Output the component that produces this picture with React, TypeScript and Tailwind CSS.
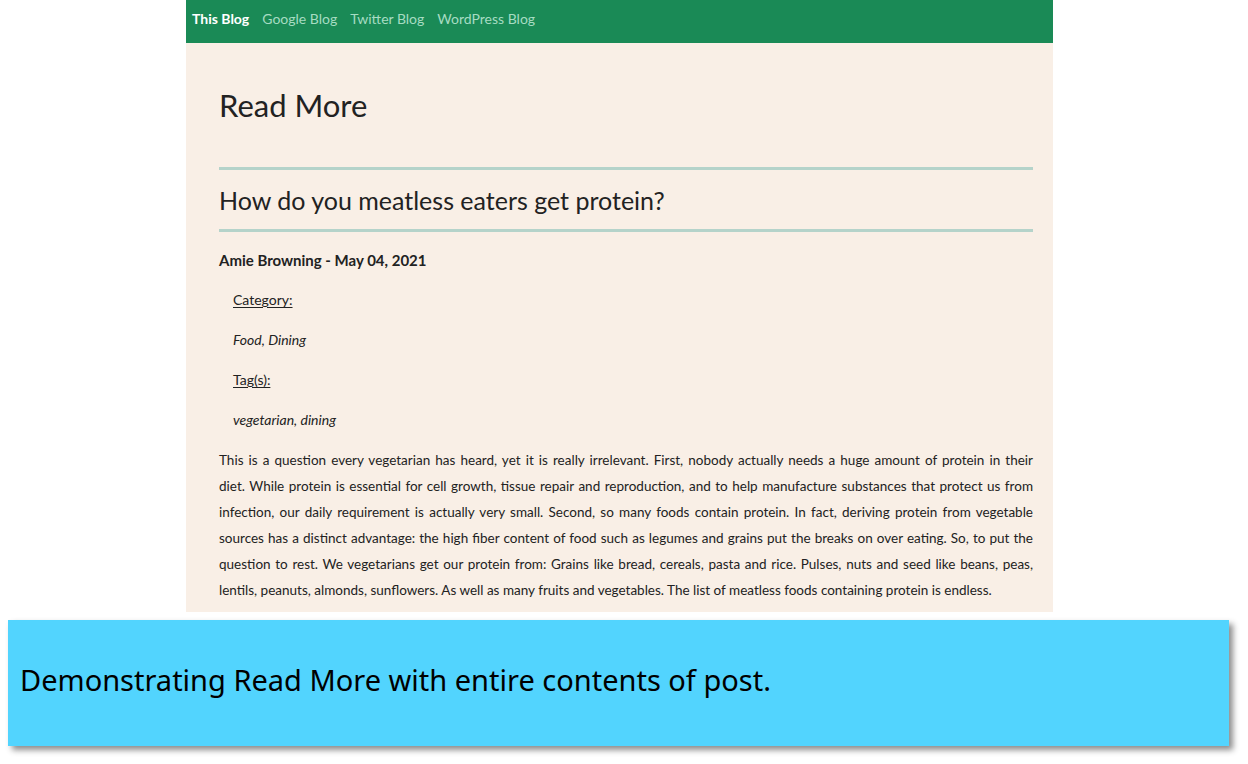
import React from "react";

const lines = [
  "This is a question every vegetarian has heard, yet it is really irrelevant. First, nobody actually needs a huge amount of protein in their",
  "diet. While protein is essential for cell growth, tissue repair and reproduction, and to help manufacture substances that protect us from",
  "infection, our daily requirement is actually very small. Second, so many foods contain protein. In fact, deriving protein from vegetable",
  "sources has a distinct advantage: the high fiber content of food such as legumes and grains put the breaks on over eating. So, to put the",
  "question to rest. We vegetarians get our protein from: Grains like bread, cereals, pasta and rice. Pulses, nuts and seed like beans, peas,",
];
const lastLine =
  "lentils, peanuts, almonds, sunflowers. As well as many fruits and vegetables. The list of meatless foods containing protein is endless.";

export default function App() {
  return (
    <div className="min-h-[764px] w-full bg-white relative">
      <div className="ml-[186px] w-[867px] font-['Lato',sans-serif] text-[#222]">
        <nav className="h-[43px] bg-[#1a8a56] pl-[6px] pt-[9px] flex gap-[13px] text-[14px] leading-[20px]">
          <span className="text-white font-bold">This Blog</span>
          <span className="text-[#a6dcc2]">Google Blog</span>
          <span className="text-[#a6dcc2]">Twitter Blog</span>
          <span className="text-[#a6dcc2]">WordPress Blog</span>
        </nav>
        <div className="bg-[#f9efe6] pl-[33px] pr-[20px] pt-[42px] pb-[9px]">
          <h1 className="text-[31px] leading-[40px]">Read More</h1>
          <div className="mt-[42px] h-[3px] bg-[#b5d3ca]" />
          <h2 className="mt-[13px] text-[25px] leading-[34px]">
            How do you meatless eaters get protein?
          </h2>
          <div className="mt-[12px] h-[3px] bg-[#b5d3ca]" />
          <div className="mt-[8px] h-[40px] leading-[40px] text-[15px] font-bold">
            Amie Browning - May 04, 2021
          </div>
          <div className="pl-[14px] text-[14px]">
            <div className="h-[40px] leading-[40px]">
              <span className="underline underline-offset-2">Category:</span>
            </div>
            <div className="h-[40px] leading-[40px] italic">Food, Dining</div>
            <div className="h-[40px] leading-[40px]">
              <span className="underline underline-offset-2">Tag(s):</span>
            </div>
            <div className="h-[40px] leading-[40px] italic">vegetarian, dining</div>
          </div>
          <div className="mt-[7px] text-[13.5px] leading-[26px]">
            {lines.map((l, i) => (
              <div key={i} className="text-justify [text-align-last:justify] whitespace-nowrap">
                {l}
              </div>
            ))}
            <div className="whitespace-nowrap">{lastLine}</div>
          </div>
        </div>
      </div>
      <div className="absolute left-[8px] top-[620px] w-[1221px] h-[126px] bg-[#52d4fe] shadow-[4px_4px_6px_rgba(0,0,0,0.45)] flex items-center pl-[12px] pb-[6px]">
        <span className="font-['Noto_Sans',sans-serif] text-[29px] text-black">
          Demonstrating Read More with entire contents of post.
        </span>
      </div>
    </div>
  );
}
